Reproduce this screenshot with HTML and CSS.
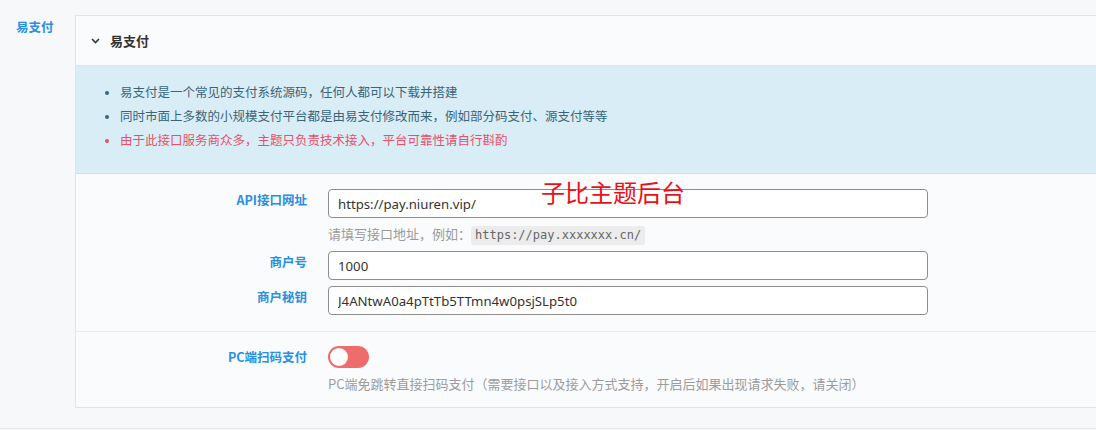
FILE: index.html
```html
<!DOCTYPE html>
<html lang="zh-CN">
<head>
<meta charset="utf-8">
<title>易支付</title>
<link rel="stylesheet" href="styles.css">
</head>
<body>
<div class="page">
  <div class="side-label">易支付</div>
  <div class="card">
    <div class="card-head">
      <svg class="chev" width="9" height="6" viewBox="0 0 9 6"><path d="M1 1 L4.5 4.5 L8 1" fill="none" stroke="#333" stroke-width="1.6"/></svg>
      <span class="card-title">易支付</span>
    </div>
    <div class="notice">
      <ul>
        <li>易支付是一个常见的支付系统源码，任何人都可以下载并搭建</li>
        <li>同时市面上多数的小规模支付平台都是由易支付修改而来，例如部分码支付、源支付等等</li>
        <li class="danger">由于此接口服务商众多，主题只负责技术接入，平台可靠性请自行斟酌</li>
      </ul>
    </div>
    <div class="form-block">
      <div class="watermark">子比主题后台</div>
      <div class="row">
        <label class="label">API接口网址</label>
        <div class="control">
          <input class="input" type="text" value="https://pay.niuren.vip/">
          <div class="hint">请填写接口地址，例如：<code>https://pay.xxxxxxx.cn/</code></div>
        </div>
      </div>
      <div class="row">
        <label class="label">商户号</label>
        <div class="control"><input class="input" type="text" value="1000"></div>
      </div>
      <div class="row">
        <label class="label">商户秘钥</label>
        <div class="control"><input class="input" type="text" value="J4ANtwA0a4pTtTb5TTmn4w0psjSLp5t0"></div>
      </div>
    </div>
    <div class="form-block switch-block">
      <div class="row">
        <label class="label">PC端扫码支付</label>
        <div class="control">
          <span class="switch"><span class="knob"></span></span>
          <div class="desc">PC端免跳转直接扫码支付（需要接口以及接入方式支持，开启后如果出现请求失败，请关闭）</div>
        </div>
      </div>
    </div>
  </div>
</div>
<div class="next-card"></div>
</body>
</html>
```
FILE: styles.css
```css
* { box-sizing: border-box; }
html, body { margin: 0; padding: 0; }
body {
  background: #f6f8fa;
  font-family: "Noto Sans CJK SC", "Noto Sans", sans-serif;
  font-size: 12.5px;
  color: #333;
  overflow: hidden;
  width: 1096px;
  height: 430px;
}
.page {
  display: flex;
  align-items: flex-start;
  padding-top: 15px;
}
.side-label {
  width: 75px;
  flex: none;
  padding: 2px 0 0 16px;
  color: #2a8fe0;
  font-weight: bold;
  font-size: 12.5px;
  line-height: 20px;
}
.card {
  flex: none;
  width: 1040px;
  background: #fafbfd;
  border: 1px solid #e3e4e6;
  border-right: none;
  height: 393px;
}
.card-head {
  height: 50px;
  display: flex;
  align-items: center;
  padding-left: 15px;
  border-bottom: 1px solid #e3e4e6;
}
.chev { margin-right: 10px; }
.card-title {
  font-weight: bold;
  font-size: 13px;
  color: #333;
}
.notice {
  background: #d9edf7;
  border-bottom: 1px solid #c7e3ef;
  padding: 14px 0 20px;
  height: 108px;
}
.notice ul {
  margin: 0;
  padding-left: 44px;
}
.notice li {
  line-height: 24px;
  color: #3a6479;
}
.notice li::marker { font-size: 11px; }
.notice li.danger { color: #e8506a; }
.form-block {
  position: relative;
  padding: 15px 0 16px;
  display: flex;
  flex-direction: column;
  gap: 6px;
  border-bottom: 1px solid #e8e9eb;
}
.switch-block {
  padding: 14px 0 14px;
  border-bottom: none;
}
.row {
  display: flex;
  gap: 21px;
}
.label {
  width: 231px;
  flex: none;
  text-align: right;
  color: #2a8fe0;
  font-weight: 600;
  line-height: 20px;
  padding-top: 1px;
}
.control { width: 600px; flex: none; }
.input {
  display: block;
  width: 600px;
  height: 29px;
  border: 1px solid #8d8d8d;
  border-radius: 4px;
  background: #fff;
  padding: 0 9px;
  font-family: "Noto Sans", "Noto Sans CJK SC", sans-serif;
  font-size: 13.2px;
  color: #333;
  outline: none;
}
.hint {
  margin-top: 6px;
  color: #9a9a9a;
  font-size: 13px;
  line-height: 19px;
}
.hint code {
  display: inline-block;
  font-family: "DejaVu Sans Mono", "Liberation Mono", monospace;
  font-size: 12px;
  background: #ececec;
  color: #666;
  border-radius: 3px;
  padding: 0 4px;
  line-height: 19px;
}
.watermark {
  position: absolute;
  left: 465px;
  top: 4px;
  font-size: 24px;
  line-height: 28px;
  color: #e8101a;
  font-family: "Noto Sans CJK SC", sans-serif;
}
.switch {
  display: block;
  width: 41px;
  height: 22px;
  border-radius: 11px;
  background: #ee6d6c;
  position: relative;
}
.knob {
  position: absolute;
  left: 2px;
  top: 2px;
  width: 18px;
  height: 18px;
  border-radius: 50%;
  background: #fff;
}
.desc {
  margin-top: 7px;
  color: #9c9c9c;
  font-size: 13px;
  line-height: 18px;
}
.next-card {
  margin-top: 20px;
  border-top: 1px solid #e6e7e9;
  height: 10px;
  background: #f6f8fa;
}
```
